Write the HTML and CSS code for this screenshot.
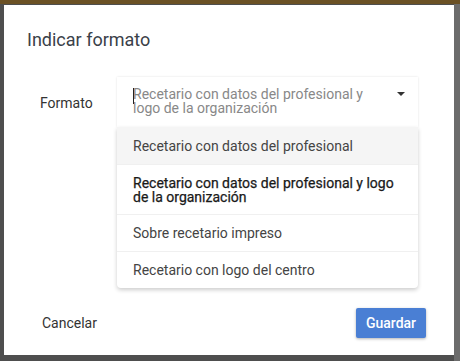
FILE: index.html
```html
<!DOCTYPE html>
<html lang="es">
<head>
  <meta charset="UTF-8" />
  <title>Indicar formato</title>
  <link rel="stylesheet" href="styles.css">
</head>
<body>
  <div class="dialog">
    <h2 class="dialog-title">Indicar formato</h2>

    <div class="field">
      <label class="field-label">Formato</label>
      <div class="select-wrap">
        <div class="select">
          <span class="caret"></span>
          <span class="placeholder">Recetario con datos del profesional y logo de la organización</span>
          <svg class="arrow" width="8" height="4" viewBox="0 0 8 4"><path d="M0 0h8L4 4z" fill="#333"/></svg>
        </div>
        <ul class="menu">
          <li class="option hover">Recetario con datos del profesional</li>
          <li class="option selected">Recetario con datos del profesional y logo de la organización</li>
          <li class="option">Sobre recetario impreso</li>
          <li class="option">Recetario con logo del centro</li>
        </ul>
      </div>
    </div>

    <div class="dialog-actions">
      <button class="btn-cancel">Cancelar</button>
      <button class="btn-save">Guardar</button>
    </div>
  </div>
</body>
</html>
```

FILE: styles.css
```css
body {
  margin: 0;
  height: 361px;
  overflow: hidden;
  font-family: Roboto, 'Liberation Sans', sans-serif;
  background:
    linear-gradient(to bottom, #6b5125 0, #6b5125 4px, transparent 4px),
    linear-gradient(to right, #4e4e4e 0, #4e4e4e 454px, #6c6c6c 454px);
}

.dialog {
  box-sizing: border-box;
  width: 450px;
  height: 350px;
  margin: 5px 0 0 4px;
  background: #fff;
  display: flex;
  flex-direction: column;
  padding: 0 28px 0 23px;
}

.dialog-title {
  margin: 23px 0 0;
  font-size: 18px;
  font-weight: 400;
  color: #3a4149;
  line-height: 24px;
}

.field {
  display: flex;
  margin-top: 25px;
}

.field-label {
  box-sizing: border-box;
  flex: 0 0 90px;
  padding: 18px 0 0 13px;
  font-size: 14px;
  color: #333;
}

.select-wrap {
  position: relative;
  flex: 0 0 301px;
}

.select {
  position: relative;
  height: 50px;
  padding: 10px 40px 0 16px;
  box-sizing: border-box;
  background: #fff;
  box-shadow: 0 0 2px rgba(0, 0, 0, 0.12);
  display: flex;
  align-items: flex-start;
}

.placeholder {
  font-size: 14px;
  line-height: 14px;
  color: #888;
}

.caret {
  position: absolute;
  left: 16px;
  top: 11px;
  width: 1px;
  height: 16px;
  background: #222;
}

.arrow {
  position: absolute;
  right: 13px;
  top: 15px;
}

.menu {
  position: absolute;
  top: 50px;
  left: 0;
  right: 0;
  margin: 0;
  padding: 0;
  list-style: none;
  background: #fff;
  border-radius: 0 0 4px 4px;
  box-shadow: 0 2px 4px rgba(0, 0, 0, 0.2);
}

.option {
  padding: 11px 16px;
  font-size: 14px;
  line-height: 14px;
  color: #444;
  border-top: 1px solid #f0f0f0;
}

.option:first-child {
  border-top: none;
}

.option.hover {
  background: #f5f5f5;
  padding: 12px 16px 11px;
}

.option.selected {
  color: #1a1a1a;
  -webkit-text-stroke: 0.25px #1a1a1a;
  padding: 11px 16px 10px;
}

.dialog-actions {
  margin-top: auto;
  margin-bottom: 17px;
  display: flex;
  justify-content: space-between;
  align-items: center;
}

.btn-cancel {
  background: none;
  border: none;
  padding: 0 0 0 15px;
  font-family: inherit;
  font-size: 14px;
  color: #333;
}

.btn-save {
  width: 70px;
  height: 30px;
  border: none;
  border-radius: 2px;
  background: #4a7fd4;
  color: #fff;
  font-family: inherit;
  font-size: 14px;
  font-weight: 500;
  box-shadow: 0 1px 3px rgba(0, 0, 0, 0.3);
}
```
